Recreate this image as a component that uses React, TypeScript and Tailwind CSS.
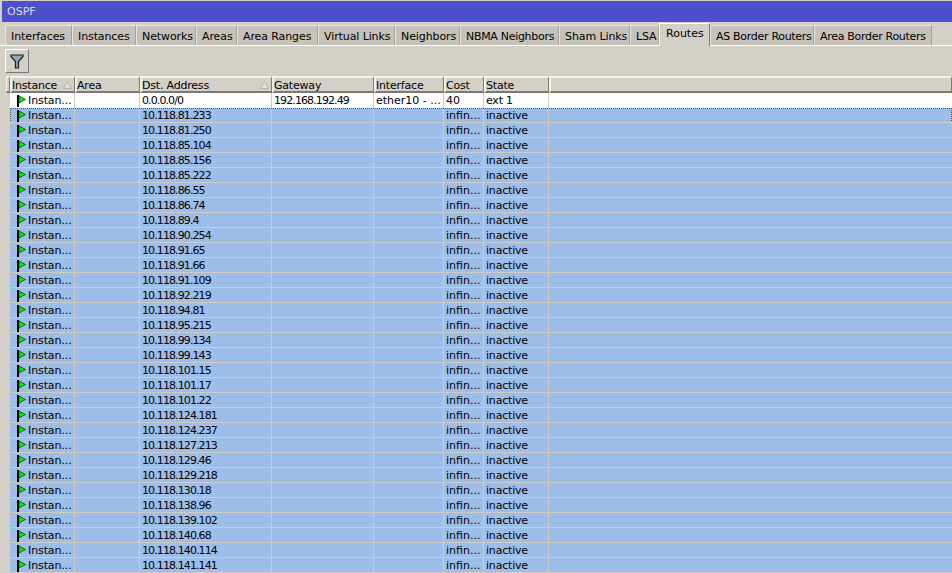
const tabs = [
  { label: 'Interfaces', width: 'w-[67px]' },
  { label: 'Instances', width: 'w-[64px]' },
  { label: 'Networks', width: 'w-[60px]' },
  { label: 'Areas', width: 'w-[41px]' },
  { label: 'Area Ranges', width: 'w-[81px]' },
  { label: 'Virtual Links', width: 'w-[77px]' },
  { label: 'Neighbors', width: 'w-[65px]' },
  { label: 'NBMA Neighbors', width: 'w-[99px]', tight: true },
  { label: 'Sham Links', width: 'w-[71px]' },
  { label: 'LSA', width: 'w-[29px]' },
  { label: 'Routes', width: 'w-[51px]' },
  { label: 'AS Border Routers', width: 'w-[104px]', tight: true },
  { label: 'Area Border Routers', width: 'w-[118px]', tight: true },
]

const addresses = [
  '10.118.81.233', '10.118.81.250', '10.118.85.104', '10.118.85.156', '10.118.85.222', '10.118.86.55', '10.118.86.74',
  '10.118.89.4', '10.118.90.254', '10.118.91.65', '10.118.91.66', '10.118.91.109', '10.118.92.219', '10.118.94.81',
  '10.118.95.215', '10.118.99.134', '10.118.99.143', '10.118.101.15', '10.118.101.17', '10.118.101.22', '10.118.124.181',
  '10.118.124.237', '10.118.127.213', '10.118.129.46', '10.118.129.218', '10.118.130.18', '10.118.138.96', '10.118.139.102',
  '10.118.140.68', '10.118.140.114', '10.118.141.141',
]

const gridCols = 'grid grid-cols-[65px_65px_132px_102px_70px_40px_65px_1fr]'

function Flag() {
  return (
    <svg width="9" height="12" viewBox="0 0 9 12" className="shrink-0">
      <rect x="0" y="0" width="2" height="12" fill="#000" />
      <path d="M2 1 L8.5 4.5 L2 8 Z" fill="#00f000" stroke="#003000" strokeWidth="0.7" />
    </svg>
  )
}

function SortArrow() {
  return (
    <svg width="9" height="8" viewBox="0 0 9 8" className="shrink-0">
      <path d="M4.5 0.5 L8.5 7.5 L0.5 7.5 Z" fill="#e4e1db" stroke="#b5b2aa" strokeWidth="1" />
    </svg>
  )
}

function HeaderCell({ label, sort }: { label?: string; sort?: boolean }) {
  return (
    <div className="flex items-start justify-between pr-[2px] h-[17px] leading-[15px] border-t-2 border-l-2 border-t-[#f4f2ee] border-l-[#f4f2ee] border-r border-r-[#7b7972] border-b-2 border-b-[#7b7972]">
      <span className="tracking-[-0.2px]">{label}</span>
      {sort && <div className="pt-[3px]"><SortArrow /></div>}
    </div>
  )
}

function Row({ address, first, focused }: { address: string; first?: boolean; focused?: boolean }) {
  const cell = 'pl-[2px] h-[15px] leading-[15px] whitespace-nowrap overflow-hidden border-r border-r-[#cfccc5]'
  return (
    <div
      className={`${gridCols} h-[15px] relative text-black ${first ? 'bg-white' : 'bg-[#9ebeea]'} ${focused ? 'outline-1 outline-dotted -outline-offset-1 outline-[#555]' : ''}`}
    >
      <div className={`${cell} flex items-center gap-[2px] pl-[7px]`}>
        <Flag />
        <span className="tracking-[-0.1px]">Instan...</span>
      </div>
      <div className={cell}></div>
      <div className={`${cell} tracking-[-0.9px]`}>{address}</div>
      <div className={`${cell} tracking-[-0.9px]`}>{first ? '192.168.192.49' : ''}</div>
      <div className={cell}>{first ? 'ether10 - ...' : ''}</div>
      <div className={cell}>{first ? '40' : 'infin...'}</div>
      <div className={`${cell} tracking-[-0.2px]`}>{first ? 'ext 1' : 'inactive'}</div>
      <div></div>
      {!first && <div className="absolute left-0 right-0 bottom-0 h-px bg-[#cfccc5]"></div>}
    </div>
  )
}

export default function App() {
  return (
    <div className="w-[952px] h-[573px] overflow-hidden bg-[#d4d0c8] text-[11px] text-black font-['DejaVu_Sans',sans-serif]">
      <div className="h-[21px] mt-[1px] ml-[2px] bg-[#4d50cc] text-[#dcdcf2] pl-[5px] leading-[21px]">OSPF</div>

      <div className="pl-[5px] pt-[1px] h-[24px] border-b border-b-white flex items-end">
        {tabs.map(tab =>
          tab.label === 'Routes' ? (
            <div key={tab.label} className={`${tab.width} h-[23px] -mb-px z-10 pl-[6px] pt-[2px] whitespace-nowrap bg-[#d4d0c8] border-t border-l border-t-white border-l-white border-r border-r-[#7b7972]`}>
              {tab.label}
            </div>
          ) : (
            <div key={tab.label} className={`${tab.width} h-[20px] pl-[5px] pt-[3px] whitespace-nowrap ${tab.tight ? 'tracking-[-0.3px]' : 'tracking-[-0.1px]'} bg-[#c6c2ba] border-l border-t border-l-[#e8e6e1] border-t-[#e8e6e1] border-r border-r-[#a3a098]`}>
              {tab.label}
            </div>
          ),
        )}
      </div>

      <div className="h-[30px] pl-[5px] pt-[3px]">
        <div className="w-[24px] h-[24px] flex items-center justify-center border border-t-white border-l-white border-r-[#7b7972] border-b-[#7b7972]">
          <svg width="14" height="15" viewBox="0 0 14 15">
            <path d="M1 1 L13 1 L13 2.5 L8.5 7.5 L8.5 14 L5.5 14 L5.5 7.5 L1 2.5 Z" fill="#8fa8c4" stroke="#1a1a1a" strokeWidth="1.2" />
          </svg>
        </div>
      </div>

      <div className="pl-[6px]">
        <div className="flex">
          <div className="w-[4px] h-[17px] border-l border-t-2 border-t-[#f4f2ee] border-l-[#f4f2ee] border-r border-r-[#7b7972] border-b-2 border-b-[#7b7972]"></div>
          <div className={`${gridCols} flex-1`}>
            <HeaderCell label="Instance" sort />
            <HeaderCell label="Area" />
            <HeaderCell label="Dst. Address" sort />
            <HeaderCell label="Gateway" />
            <HeaderCell label="Interface" />
            <HeaderCell label="Cost" />
            <HeaderCell label="State" />
            <HeaderCell />
          </div>
        </div>
        <div className="flex">
          <div className="w-[4px] shrink-0"></div>
          <div className="flex-1">
            <Row address="0.0.0.0/0" first />
            {addresses.map((a, i) => (
              <Row key={a} address={a} focused={i === 0} />
            ))}
          </div>
        </div>
      </div>
    </div>
  )
}
